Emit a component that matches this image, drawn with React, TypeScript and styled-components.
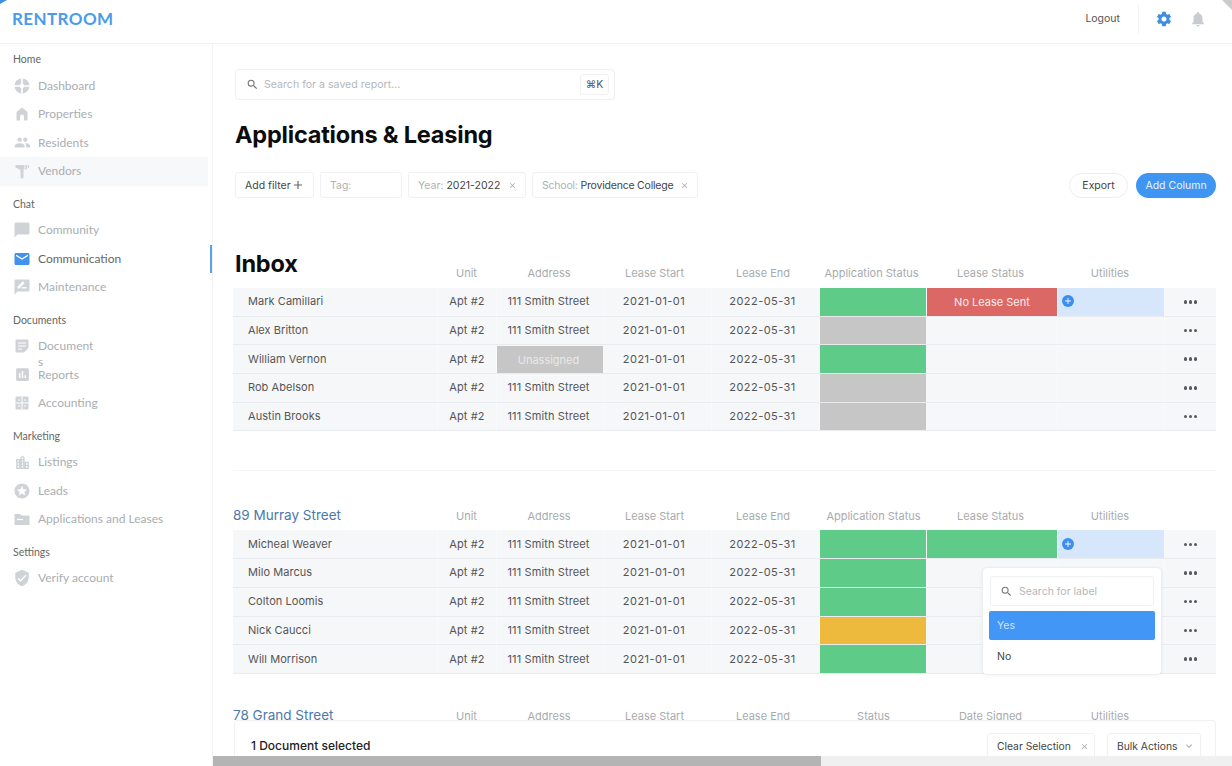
import React from "react";
import styled, { createGlobalStyle, css } from "styled-components";
import {
  MdPeople,
  MdChatBubble,
  MdEmail,
  MdRateReview,
  MdAssessment,
  MdLocationCity,
  MdStars,
  MdVerifiedUser,
  MdNotifications,
  MdSearch,
  MdClose,
  MdAdd,
  MdKeyboardArrowDown,
} from "react-icons/md";
import { IoSettingsSharp } from "react-icons/io5";

const GlobalStyle = createGlobalStyle`
  html, body, #root {
    margin: 0;
    padding: 0;
    height: 100%;
  }
  body {
    background: #fff;
    font-family: Inter, "Liberation Sans", sans-serif;
    overflow: hidden;
  }
  * {
    box-sizing: border-box;
  }
`;

const DashIcon = () => (
  <svg viewBox="0 0 16 16" width="16" height="16" fill="currentColor">
    <path d="M7.2 0.6v5.2a2.5 2.5 0 0 0-1.4 1.4H0.6A7.5 7.5 0 0 1 7.2 0.6z" />
    <path d="M8.8 0.6a7.5 7.5 0 0 1 6.6 6.6h-5.2a2.5 2.5 0 0 0-1.4-1.4z" />
    <path d="M15.4 8.8a7.5 7.5 0 0 1-6.6 6.6v-5.2a2.5 2.5 0 0 0 1.4-1.4z" />
    <path d="M7.2 15.4a7.5 7.5 0 0 1-6.6-6.6h5.2a2.5 2.5 0 0 0 1.4 1.4z" />
  </svg>
);

const HomeIcon = () => (
  <svg viewBox="0 0 16 16" width="16" height="16" fill="currentColor">
    <path d="M8 1.5 L13.5 6 V14.5 H10 V10.5 A2 2 0 0 0 6 10.5 V14.5 H2.5 V6 Z" />
  </svg>
);

const HammerIcon = () => (
  <svg viewBox="0 0 16 16" width="16" height="16" fill="currentColor">
    <path d="M1.5 2 H10.5 V6.5 H9.5 V14 A1.5 1.5 0 0 1 6.5 14 V6.5 H5 Q3 4.5 1.5 4.5 Z" />
    <rect x="11.5" y="2" width="1.5" height="4.5" />
    <rect x="13.8" y="2" width="1.2" height="3" />
  </svg>
);

const DocIcon = () => (
  <svg viewBox="0 0 16 16" width="16" height="16">
    <path fill="currentColor" d="M2.5 1.5h11a1 1 0 0 1 1 1V10l-4.500 4.500H2.500a1 1 0 0 1-1-1v-11a1 1 0 0 1 1-1z" />
    <path stroke="#fff" strokeWidth="1.200" d="M4 5h8M4 8h8M4 11h4" />
  </svg>
);

const GridIcon = () => (
  <svg viewBox="0 0 16 16" width="16" height="16">
    <rect x="1.500" y="1.500" width="13" height="13" rx="1" fill="currentColor" />
    <path stroke="#fff" strokeWidth="1" d="M8 1.500v13M1.500 8h13M4 5h2M10 5h2M4 11h2M10 11h2" />
  </svg>
);

const FolderIcon = () => (
  <svg viewBox="0 0 16 16" width="16" height="16">
    <path fill="currentColor" d="M1 3h5l1.500 1.500H15a.5.500 0 0 1 .5.500v8.500a.5.500 0 0 1-.5.500H1a.5.500 0 0 1-.5-.500V3.500A.5.500 0 0 1 1 3z" />
    <path stroke="#fff" strokeWidth="1.200" d="M3 8.500h6" />
  </svg>
);

type NavEntry = { label: string; icon: React.ReactNode; active?: boolean; hover?: boolean; narrow?: boolean };
type NavGroupData = { title: string; items: NavEntry[] };

const navGroups: NavGroupData[] = [
  {
    title: "Home",
    items: [
      { label: "Dashboard", icon: <DashIcon /> },
      { label: "Properties", icon: <HomeIcon /> },
      { label: "Residents", icon: <MdPeople size={17} /> },
      { label: "Vendors", icon: <HammerIcon />, hover: true },
    ],
  },
  {
    title: "Chat",
    items: [
      { label: "Community", icon: <MdChatBubble size={18} /> },
      { label: "Communication", icon: <MdEmail size={18} />, active: true },
      { label: "Maintenance", icon: <MdRateReview size={18} /> },
    ],
  },
  {
    title: "Documents",
    items: [
      { label: "Documents", icon: <DocIcon />, narrow: true },
      { label: "Reports", icon: <MdAssessment size={17} /> },
      { label: "Accounting", icon: <GridIcon /> },
    ],
  },
  {
    title: "Marketing",
    items: [
      { label: "Listings", icon: <MdLocationCity size={17} /> },
      { label: "Leads", icon: <MdStars size={18} /> },
      { label: "Applications and Leases", icon: <FolderIcon /> },
    ],
  },
  {
    title: "Settings",
    items: [{ label: "Verify account", icon: <MdVerifiedUser size={18} /> }],
  },
];

type Tone = "green" | "gray" | "yellow" | "red";
type RowData = {
  name: string;
  app: Tone;
  lease?: { tone: Tone; text?: string };
  util?: boolean;
  unassigned?: boolean;
};

const inboxRows: RowData[] = [
  { name: "Mark Camillari", app: "green", lease: { tone: "red", text: "No Lease Sent" }, util: true },
  { name: "Alex Britton", app: "gray" },
  { name: "William Vernon", app: "green", unassigned: true },
  { name: "Rob Abelson", app: "gray" },
  { name: "Austin Brooks", app: "gray" },
];

const murrayRows: RowData[] = [
  { name: "Micheal Weaver", app: "green", lease: { tone: "green" }, util: true },
  { name: "Milo Marcus", app: "green" },
  { name: "Colton Loomis", app: "green" },
  { name: "Nick Caucci", app: "yellow" },
  { name: "Will Morrison", app: "green" },
];

const leaseHeads = ["Unit", "Address", "Lease Start", "Lease End", "Application Status", "Lease Status", "Utilities"];
const grandHeads = ["Unit", "Address", "Lease Start", "Lease End", "Status", "Date Signed", "Utilities"];

function TableRow({ row }: { row: RowData }) {
  return (
    <Row>
      <NameCell>{row.name}</NameCell>
      <Cell>Apt #2</Cell>
      {row.unassigned ? <Unassigned>Unassigned</Unassigned> : <Cell>111 Smith Street</Cell>}
      <Cell>2021-01-01</Cell>
      <Cell>2022-05-31</Cell>
      <StatusCell $tone={row.app} />
      {row.lease ? <StatusCell $tone={row.lease.tone}>{row.lease.text}</StatusCell> : <Cell />}
      {row.util ? (
        <UtilCell>
          <PlusDot>
            <MdAdd size={10} />
          </PlusDot>
        </UtilCell>
      ) : (
        <Cell />
      )}
      <MenuCell>
        <Dots>
          <i />
          <i />
          <i />
        </Dots>
      </MenuCell>
    </Row>
  );
}

export default function App() {
  return (
    <>
      <GlobalStyle />
      <Page>
        <CornerLeft />
        <CornerRight />
        <TopBar>
          <Logo>RENTROOM</Logo>
          <TopActions>
            <Logout>Logout</Logout>
            <TopDivider />
            <GearBtn>
              <IoSettingsSharp size={16} />
            </GearBtn>
            <BellBtn>
              <MdNotifications size={18} />
            </BellBtn>
          </TopActions>
        </TopBar>
        <Body>
          <Sidebar>
            {navGroups.map((group) => (
              <NavGroup key={group.title}>
                <NavTitle>{group.title}</NavTitle>
                {group.items.map((item) => (
                  <NavItem key={item.label} $active={item.active} $hover={item.hover}>
                    <NavIcon $active={item.active}>{item.icon}</NavIcon>
                    <NavText $narrow={item.narrow} $active={item.active}>
                      {item.label}
                    </NavText>
                  </NavItem>
                ))}
              </NavGroup>
            ))}
          </Sidebar>
          <Main>
            <SearchBox>
              <MdSearch size={13} color="#6f7478" />
              <SearchHint>Search for a saved report...</SearchHint>
              <Kbd>⌘K</Kbd>
            </SearchBox>
            <Title>Applications &amp; Leasing</Title>
            <FilterBar>
              <Chip $w={79}>
                Add filter
                <MdAdd size={14} color="#666" />
              </Chip>
              <Chip $w={82}>
                <Muted>Tag:</Muted>
              </Chip>
              <Chip $w={118}>
                <span>
                  <Muted>Year: </Muted>2021-2022
                </span>
                <MdClose size={9} color="#aaa" />
              </Chip>
              <Chip $w={166} $tight>
                <span>
                  <Muted>School: </Muted>Providence College
                </span>
                <MdClose size={9} color="#aaa" />
              </Chip>
              <FilterActions>
                <ExportBtn>Export</ExportBtn>
                <AddBtn>Add Column</AddBtn>
              </FilterActions>
            </FilterBar>

            <Section $top={51}>
              <HeadRow $gap={8} $shiftApp>
                <InboxTitle>Inbox</InboxTitle>
                {leaseHeads.map((h) => (
                  <HeadCell key={h}>{h}</HeadCell>
                ))}
              </HeadRow>
              {inboxRows.map((r) => (
                <TableRow key={r.name} row={r} />
              ))}
            </Section>

            <SectionRule />

            <Section $top={35}>
              <HeadRow $gap={7}>
                <GroupTitle>89 Murray Street</GroupTitle>
                {leaseHeads.map((h) => (
                  <HeadCell key={h}>{h}</HeadCell>
                ))}
              </HeadRow>
              <Rows>
                {murrayRows.map((r) => (
                  <TableRow key={r.name} row={r} />
                ))}
                <LabelMenu>
                  <LabelSearch>
                    <MdSearch size={13} color="#777" />
                    Search for label
                  </LabelSearch>
                  <LabelOption $selected>Yes</LabelOption>
                  <LabelOption>No</LabelOption>
                </LabelMenu>
              </Rows>
            </Section>

            <Section $top={32}>
              <HeadRow $gap={7}>
                <GroupTitle>78 Grand Street</GroupTitle>
                {grandHeads.map((h) => (
                  <HeadCell key={h}>{h}</HeadCell>
                ))}
              </HeadRow>
            </Section>

            <SelectionBar>
              <SelectionText>1 Document selected</SelectionText>
              <SelectionBtn $w={108}>
                Clear Selection
                <MdClose size={9} color="#aaa" />
              </SelectionBtn>
              <SelectionBtn $w={94}>
                Bulk Actions
                <MdKeyboardArrowDown size={12} color="#aaa" />
              </SelectionBtn>
            </SelectionBar>
            <ScrollTrack>
              <ScrollThumb />
            </ScrollTrack>
          </Main>
        </Body>
      </Page>
    </>
  );
}

const Page = styled.div`
  position: relative;
  width: 1232px;
  height: 766px;
  overflow: hidden;
  display: flex;
  flex-direction: column;
  background: #fff;
`;

const CornerLeft = styled.div`
  position: absolute;
  top: 0;
  left: 0;
  width: 7px;
  height: 4px;
  background: #3f8fe0;
  clip-path: polygon(0 0, 100% 0, 0 100%);
`;

const CornerRight = styled.div`
  position: absolute;
  top: 0;
  right: 0;
  width: 10px;
  height: 10px;
  background: #c9cbcd;
  clip-path: polygon(0 0, 100% 0, 100% 100%);
`;

const TopBar = styled.header`
  height: 44px;
  flex: none;
  display: flex;
  align-items: center;
  justify-content: space-between;
  padding: 0 25px 6px 12px;
  border-bottom: 1px solid #f0f1f3;
`;

const Logo = styled.div`
  font-family: Lato, sans-serif;
  font-size: 17px;
  font-weight: 700;
  letter-spacing: 0.4px;
  color: #4a9bea;
`;

const TopActions = styled.div`
  display: flex;
  align-items: center;
`;

const Logout = styled.div`
  font-size: 10.500px;
  color: #555;
`;

const TopDivider = styled.div`
  width: 1px;
  height: 30px;
  margin: 0 17px 0 18px;
  background: #f3f4f5;
`;

const GearBtn = styled.div`
  display: flex;
  color: #3f8fe0;
`;

const BellBtn = styled.div`
  display: flex;
  margin-left: 17px;
  color: #c8ccd0;
`;

const Body = styled.div`
  flex: 1;
  min-height: 0;
  display: flex;
`;

const Sidebar = styled.aside`
  width: 213px;
  flex: none;
  padding: 7px 4px 0 0;
  border-right: 1px solid #f1f3f5;
`;

const NavGroup = styled.div`
  margin-bottom: 10px;
`;

const NavTitle = styled.div`
  height: 16px;
  margin-bottom: 4.500px;
  padding-left: 13px;
  font-family: Lato, sans-serif;
  font-size: 10.500px;
  line-height: 16px;
  color: #666;
`;

const NavItem = styled.div<{ $active?: boolean; $hover?: boolean }>`
  position: relative;
  height: 28.500px;
  display: flex;
  align-items: center;
  padding-left: 13px;
  background: ${(p) => (p.$hover ? "#f6f8f9" : "transparent")};
  ${(p) =>
    p.$active &&
    css`
      &::after {
        content: "";
        position: absolute;
        top: 0;
        right: -4px;
        width: 2px;
        height: 28px;
        background: #5b9fe6;
      }
    `}
`;

const NavIcon = styled.span<{ $active?: boolean }>`
  width: 18px;
  flex: none;
  display: flex;
  justify-content: center;
  color: ${(p) => (p.$active ? "#3f93ee" : "#cfd3d7")};
`;

const NavText = styled.span<{ $narrow?: boolean; $active?: boolean }>`
  margin-left: 7px;
  height: 16px;
  font-family: Lato, sans-serif;
  font-size: 12px;
  line-height: 16px;
  color: ${(p) => (p.$active ? "#666" : "#a9aeb3")};
  ${(p) =>
    p.$narrow &&
    css`
      width: 58px;
      word-break: break-all;
    `}
`;

const Main = styled.main`
  position: relative;
  flex: 1;
  min-width: 0;
  padding: 25px 16px 0 20px;
  overflow: hidden;
`;

const SearchBox = styled.div`
  width: 380px;
  height: 31px;
  margin-left: 2px;
  padding: 0 5px 0 10px;
  display: flex;
  align-items: center;
  border: 1px solid #eef0f1;
  border-radius: 4px;
`;

const SearchHint = styled.span`
  flex: 1;
  margin-left: 5px;
  font-size: 10.600px;
  color: #b5b8bb;
`;

const Kbd = styled.span`
  width: 29px;
  height: 21px;
  display: flex;
  align-items: center;
  justify-content: center;
  border: 1px solid #f0f1f2;
  border-radius: 3px;
  font-size: 10.500px;
  color: #555;
`;

const Title = styled.h1`
  margin: 20px 0 0 2px;
  font-size: 23.500px;
  line-height: 30px;
  font-weight: 700;
  letter-spacing: -0.2px;
  color: #0c0c0c;
`;

const FilterBar = styled.div`
  height: 26px;
  margin: 22px 0 0 2px;
  display: flex;
  align-items: center;
  gap: 6px;
`;

const Chip = styled.div<{ $w: number; $tight?: boolean }>`
  width: ${(p) => p.$w}px;
  height: 26px;
  padding: 0 8px 0 9px;
  display: flex;
  align-items: center;
  justify-content: space-between;
  border: 1px solid #eef0f1;
  border-radius: 3px;
  font-size: 10.500px;
  letter-spacing: ${(p) => (p.$tight ? "-0.2px" : "0")};
  color: #444;
  white-space: nowrap;
`;

const Muted = styled.span`
  color: #aeb1b4;
`;

const FilterActions = styled.div`
  margin-left: auto;
  display: flex;
  gap: 8px;
`;

const pillBtn = css`
  height: 25px;
  display: flex;
  align-items: center;
  justify-content: center;
  border-radius: 13px;
  font-size: 10.500px;
`;

const ExportBtn = styled.div`
  ${pillBtn}
  width: 59px;
  border: 1px solid #eceef0;
  color: #444;
`;

const AddBtn = styled.div`
  ${pillBtn}
  width: 80px;
  background: #3f96f2;
  color: #e9f3fe;
`;

const Section = styled.section<{ $top: number }>`
  margin-top: ${(p) => p.$top}px;
`;

const gridCols = css`
  display: grid;
  grid-template-columns: 205px 59px 107px 108px 108px 107px 131px 107px 51px;
`;

const textOffsets = css`
  & > :nth-child(3) {
    padding-right: 3px;
  }
  & > :nth-child(4) {
    padding-right: 7px;
  }
  & > :nth-child(5) {
    padding-right: 6px;
  }
`;

const HeadRow = styled.div<{ $gap: number; $shiftApp?: boolean }>`
  ${gridCols}
  ${textOffsets}
  & > :nth-child(2) {
    padding-right: 2px;
  }
  & > :nth-child(6) {
    padding-right: ${(p) => (p.$shiftApp ? "4px" : "0")};
  }
  & > :nth-child(7) {
    padding-right: 4px;
  }
  & > :nth-child(8) {
    padding-right: 3px;
  }
  & > div {
    margin-bottom: ${(p) => p.$gap}px;
  }
`;

const HeadCell = styled.div`
  align-self: end;
  height: 14px;
  text-align: center;
  font-size: 11px;
  line-height: 14px;
  white-space: nowrap;
  color: #a8abae;
`;

const InboxTitle = styled.h2`
  margin: 0;
  padding: 0 0 9px 2px;
  font-size: 23.500px;
  line-height: 30px;
  font-weight: 700;
  letter-spacing: -0.2px;
  color: #0c0c0c;
`;

const GroupTitle = styled.h3`
  margin: 0;
  padding-bottom: 6px;
  font-size: 13.500px;
  line-height: 18px;
  font-weight: 400;
  color: #4d78aa;
`;

const Rows = styled.div`
  position: relative;
`;

const Row = styled.div`
  ${gridCols}
  ${textOffsets}
  height: 28.700px;
  background: #f6f7f9;
  border-bottom: 1px solid #e9ebee;
  & > :nth-child(4),
  & > :nth-child(5) {
    letter-spacing: 0.45px;
  }
`;

const Cell = styled.div`
  display: flex;
  align-items: center;
  justify-content: center;
  padding-bottom: 1px;
  border-right: 1px solid #f9fafb;
  font-size: 11px;
  letter-spacing: 0.12px;
  white-space: nowrap;
  color: #555;
`;

const NameCell = styled(Cell)`
  justify-content: flex-start;
  padding-left: 15px;
  letter-spacing: 0.05px;
`;

const toneColors: Record<Tone, string> = {
  green: "#5fcb88",
  gray: "#c6c6c6",
  yellow: "#eeba3d",
  red: "#db6864",
};

const StatusCell = styled.div<{ $tone: Tone }>`
  display: flex;
  align-items: center;
  justify-content: center;
  margin: 0 1px 0 0;
  background: ${(p) => toneColors[p.$tone]};
  font-size: 11px;
  color: #fbeeee;
`;

const Unassigned = styled(StatusCell).attrs({ $tone: "gray" as Tone })`
  color: #e8e8e8;
  margin-top: 1px;
`;

const UtilCell = styled(Cell)`
  justify-content: flex-start;
  padding-left: 4px;
  background: #d6e6fb;
`;

const PlusDot = styled.span`
  width: 12px;
  height: 12px;
  display: flex;
  align-items: center;
  justify-content: center;
  border-radius: 50%;
  background: #3c8ff0;
  color: #fff;
`;

const MenuCell = styled.div`
  display: flex;
  align-items: center;
  justify-content: center;
`;

const Dots = styled.span`
  display: flex;
  gap: 1.500px;
  i {
    width: 3.500px;
    height: 3.500px;
    border-radius: 50%;
    background: #55585c;
  }
`;

const SectionRule = styled.div`
  height: 1px;
  margin-top: 39px;
  background: #f5f6f7;
`;

const LabelMenu = styled.div`
  position: absolute;
  top: 37px;
  left: 749px;
  width: 180px;
  height: 108px;
  padding: 8px 6px 0;
  background: #fff;
  border: 1px solid #eceef0;
  border-radius: 5px;
  box-shadow: 0 1px 4px rgba(0, 0, 0, 0.05);
`;

const LabelSearch = styled.div`
  height: 30px;
  margin: 0 1px;
  padding-left: 9px;
  display: flex;
  align-items: center;
  gap: 6px;
  border: 1px solid #f0f1f2;
  border-radius: 3px;
  font-size: 10.500px;
  color: #b5b8bb;
`;

const LabelOption = styled.div<{ $selected?: boolean }>`
  height: 29px;
  margin-top: ${(p) => (p.$selected ? "5px" : "2px")};
  padding-left: 8px;
  display: flex;
  align-items: center;
  border-radius: 2px;
  font-size: 10.500px;
  background: ${(p) => (p.$selected ? "#4296f5" : "transparent")};
  color: ${(p) => (p.$selected ? "#cfe4fb" : "#444")};
`;

const SelectionBar = styled.div`
  position: absolute;
  left: 21px;
  right: 16px;
  top: 676px;
  height: 50px;
  padding: 12px 14px 0 16px;
  display: flex;
  align-items: flex-start;
  gap: 12px;
  background: #fff;
  border: 1px solid #f0f1f2;
  border-radius: 4px;
`;

const SelectionText = styled.div`
  flex: 1;
  height: 24px;
  display: flex;
  align-items: center;
  font-size: 12px;
  font-weight: 500;
  color: #222;
`;

const SelectionBtn = styled.div<{ $w: number }>`
  width: ${(p) => p.$w}px;
  height: 26px;
  padding: 0 5px 0 9px;
  display: flex;
  align-items: center;
  justify-content: space-between;
  border: 1px solid #eef0f1;
  border-radius: 3px;
  font-size: 10.300px;
  color: #444;
`;

const ScrollTrack = styled.div`
  position: absolute;
  left: 0;
  right: 0;
  bottom: 0;
  height: 10px;
  background: #f0f0f0;
`;

const ScrollThumb = styled.div`
  width: 608px;
  height: 100%;
  background: #b4b4b4;
`;
